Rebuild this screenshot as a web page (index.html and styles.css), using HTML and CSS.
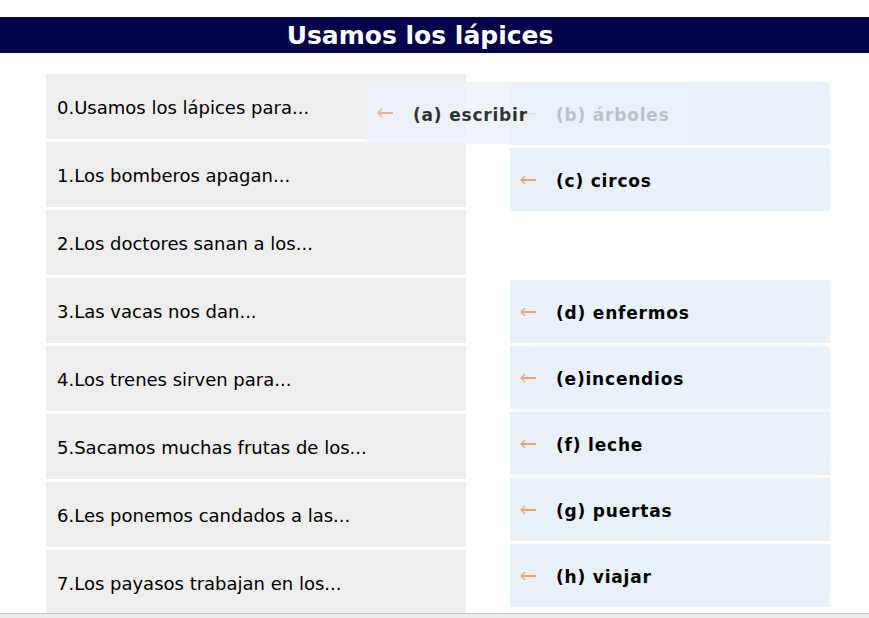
FILE: index.html
```html
<!DOCTYPE html>
<html lang="es">
<head>
<meta charset="utf-8">
<title>Usamos los lápices</title>
<link rel="stylesheet" href="styles.css">
</head>
<body>
<h1 class="title">Usamos los lápices</h1>
<div class="board">
  <div class="questions">
    <div class="question">0.Usamos los lápices para...</div>
    <div class="question">1.Los bomberos apagan...</div>
    <div class="question">2.Los doctores sanan a los...</div>
    <div class="question">3.Las vacas nos dan...</div>
    <div class="question">4.Los trenes sirven para...</div>
    <div class="question">5.Sacamos muchas frutas de los...</div>
    <div class="question">6.Les ponemos candados a las...</div>
    <div class="question">7.Los payasos trabajan en los...</div>
  </div>
  <div class="answers">
    <div class="answer"><svg class="arrow" viewBox="0 0 17 10" width="17" height="10"><path d="M1 5H16" stroke-width="2"/><path d="M5 1L1 5L5 9" stroke-width="1.2"/></svg><span>(b) árboles</span></div>
    <div class="answer"><svg class="arrow" viewBox="0 0 17 10" width="17" height="10"><path d="M1 5H16" stroke-width="2"/><path d="M5 1L1 5L5 9" stroke-width="1.2"/></svg><span>(c) circos</span></div>
    <div class="slot"></div>
    <div class="answer"><svg class="arrow" viewBox="0 0 17 10" width="17" height="10"><path d="M1 5H16" stroke-width="2"/><path d="M5 1L1 5L5 9" stroke-width="1.2"/></svg><span>(d) enfermos</span></div>
    <div class="answer"><svg class="arrow" viewBox="0 0 17 10" width="17" height="10"><path d="M1 5H16" stroke-width="2"/><path d="M5 1L1 5L5 9" stroke-width="1.2"/></svg><span>(e)incendios</span></div>
    <div class="answer"><svg class="arrow" viewBox="0 0 17 10" width="17" height="10"><path d="M1 5H16" stroke-width="2"/><path d="M5 1L1 5L5 9" stroke-width="1.2"/></svg><span>(f) leche</span></div>
    <div class="answer"><svg class="arrow" viewBox="0 0 17 10" width="17" height="10"><path d="M1 5H16" stroke-width="2"/><path d="M5 1L1 5L5 9" stroke-width="1.2"/></svg><span>(g) puertas</span></div>
    <div class="answer"><svg class="arrow" viewBox="0 0 17 10" width="17" height="10"><path d="M1 5H16" stroke-width="2"/><path d="M5 1L1 5L5 9" stroke-width="1.2"/></svg><span>(h) viajar</span></div>
  </div>
  <div class="answer dragging"><svg class="arrow" viewBox="0 0 17 10" width="17" height="10"><path d="M1 5H16" stroke-width="2"/><path d="M5 1L1 5L5 9" stroke-width="1.2"/></svg><span>(a) escribir</span></div>
</div>
<div class="scrollbar"></div>
</body>
</html>
```

FILE: styles.css
```css
html, body {
  margin: 0;
  padding: 0;
  background: #ffffff;
  overflow: hidden;
  height: 100%;
}

body {
  font-family: "DejaVu Sans", Verdana, sans-serif;
  color: #000;
}

.title {
  margin: 17px 0 0;
  height: 36px;
  line-height: 38px;
  background: #04044a;
  color: #ffffff;
  font-size: 25px;
  font-weight: bold;
  text-align: center;
  padding-right: 29px;
}

.board {
  position: relative;
  display: flex;
  gap: 44px;
  margin: 21px 0 0 46px;
}

.questions {
  display: flex;
  flex-direction: column;
  gap: 3px;
  width: 420px;
}

.question {
  height: 65px;
  background: #eeeeee;
  display: flex;
  align-items: center;
  padding-left: 11px;
  padding-top: 2px;
  box-sizing: border-box;
  font-size: 18px;
}

.answers {
  display: flex;
  flex-direction: column;
  gap: 3px;
  width: 320px;
  padding-top: 8px;
}

.answer {
  height: 63px;
  background: #e8f0f8;
  display: flex;
  align-items: center;
  padding-left: 10px;
  gap: 19px;
  font-size: 17px;
  font-weight: bold;
  letter-spacing: 0.8px;
  box-sizing: border-box;
}

.answer span {
  padding-top: 3px;
}

.slot {
  height: 63px;
}

.arrow {
  flex: none;
  fill: none;
  stroke: #f4a06a;
}

.dragging {
  position: absolute;
  left: 321px;
  top: 8px;
  width: 320px;
  height: 62px;
  background: #ebf2fa;
  opacity: 0.8;
}

.scrollbar {
  position: fixed;
  left: 0;
  right: 0;
  bottom: 0;
  height: 4px;
  background: #ececec;
  border-top: 1px solid #c4c4c4;
}
```
